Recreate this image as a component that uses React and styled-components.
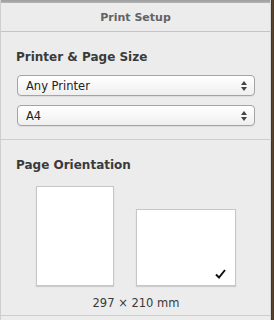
import React from "react";
import styled, { createGlobalStyle } from "styled-components";

const Global = createGlobalStyle`
  html, body { margin: 0; padding: 0; background: #ececec; }
  body { font-family: "Lucida Grande", "DejaVu Sans", sans-serif; }
`;

const Frame = styled.div`
  display: flex;
  width: 274px;
  height: 320px;
  overflow: hidden;
`;

const Panel = styled.div`
  flex: 0 0 269px;
  display: flex;
  flex-direction: column;
  background: #ececec;
  border-left: 1px solid #cfcfcf;
  border-right: 1px solid #d6d6d6;
`;

const WoodEdge = styled.div`
  flex: 1;
  background: linear-gradient(90deg, #3d2c1e, #5b4330 50%, #4a3624);
`;

const TopStrip = styled.div`
  height: 3px;
  background: linear-gradient(#9d9d9d, #b4b4b4);
`;

const TitleBar = styled.div`
  height: 27px;
  display: flex;
  align-items: center;
  justify-content: center;
  border-bottom: 1px solid #c4c4c4;
  font-size: 11px;
  font-weight: bold;
  color: #636363;
  padding-top: 1px;
`;

const Section = styled.div`
  display: flex;
  flex-direction: column;
  padding: ${(p) => p.$pad};
  border-bottom: 1px solid #cdcdcd;
`;

const Heading = styled.div`
  font-size: 12px;
  line-height: 15px;
  font-weight: bold;
  color: #3a3a3a;
  margin-left: -1px;
`;

const Popup = styled.div`
  position: relative;
  height: 19px;
  margin-top: ${(p) => p.$mt}px;
  display: flex;
  align-items: center;
  padding-left: 8px;
  border: 1px solid #a4a4a4;
  border-radius: 4px;
  background: linear-gradient(#ffffff, #f6f6f6 60%, #efefef);
  box-shadow: 0 1px 0 rgba(0, 0, 0, 0.06);
  font-size: 11.5px;
  color: #222;
`;

const Arrows = styled.svg`
  position: absolute;
  right: 7px;
  top: 5px;
`;

const Pages = styled.div`
  display: flex;
  justify-content: center;
  align-items: flex-end;
  gap: 22px;
  margin-top: 13px;
`;

const Page = styled.div`
  position: relative;
  width: ${(p) => p.$w}px;
  height: ${(p) => p.$h}px;
  background: #fff;
  border: 1px solid #c6c6c6;
  box-shadow: 0 1px 1px rgba(0, 0, 0, 0.12);
`;

const Check = styled.svg`
  position: absolute;
  right: 9px;
  bottom: 6px;
`;

const Size = styled.div`
  text-align: center;
  font-size: 11.5px;
  line-height: 15px;
  color: #3a3a3a;
  margin-top: 10px;
`;

function UpDown() {
  return (
    <Arrows width="6" height="10" viewBox="0 0 6 10">
      <path d="M3 0 L6 4 L0 4 Z" fill="#444" />
      <path d="M0 6 L6 6 L3 10 Z" fill="#444" />
    </Arrows>
  );
}

export default function App() {
  return (
    <>
      <Global />
      <Frame>
        <Panel>
          <TopStrip />
          <TitleBar>Print Setup</TitleBar>
          <Section $pad="18px 15px 13px 16px">
            <Heading>Printer &amp; Page Size</Heading>
            <Popup $mt={10}>
              Any Printer
              <UpDown />
            </Popup>
            <Popup $mt={9}>
              A4
              <UpDown />
            </Popup>
          </Section>
          <Section $pad="18px 15px 4px 16px">
            <Heading>Page Orientation</Heading>
            <Pages>
              <Page $w={76} $h={98} />
              <Page $w={98} $h={75}>
                <Check width="11" height="10" viewBox="0 0 11 10">
                  <path d="M1 5.5 L4 8.5 L10 1" fill="none" stroke="#111" strokeWidth="2" />
                </Check>
              </Page>
            </Pages>
            <Size>297 × 210 mm</Size>
          </Section>
        </Panel>
        <WoodEdge />
      </Frame>
    </>
  );
}
